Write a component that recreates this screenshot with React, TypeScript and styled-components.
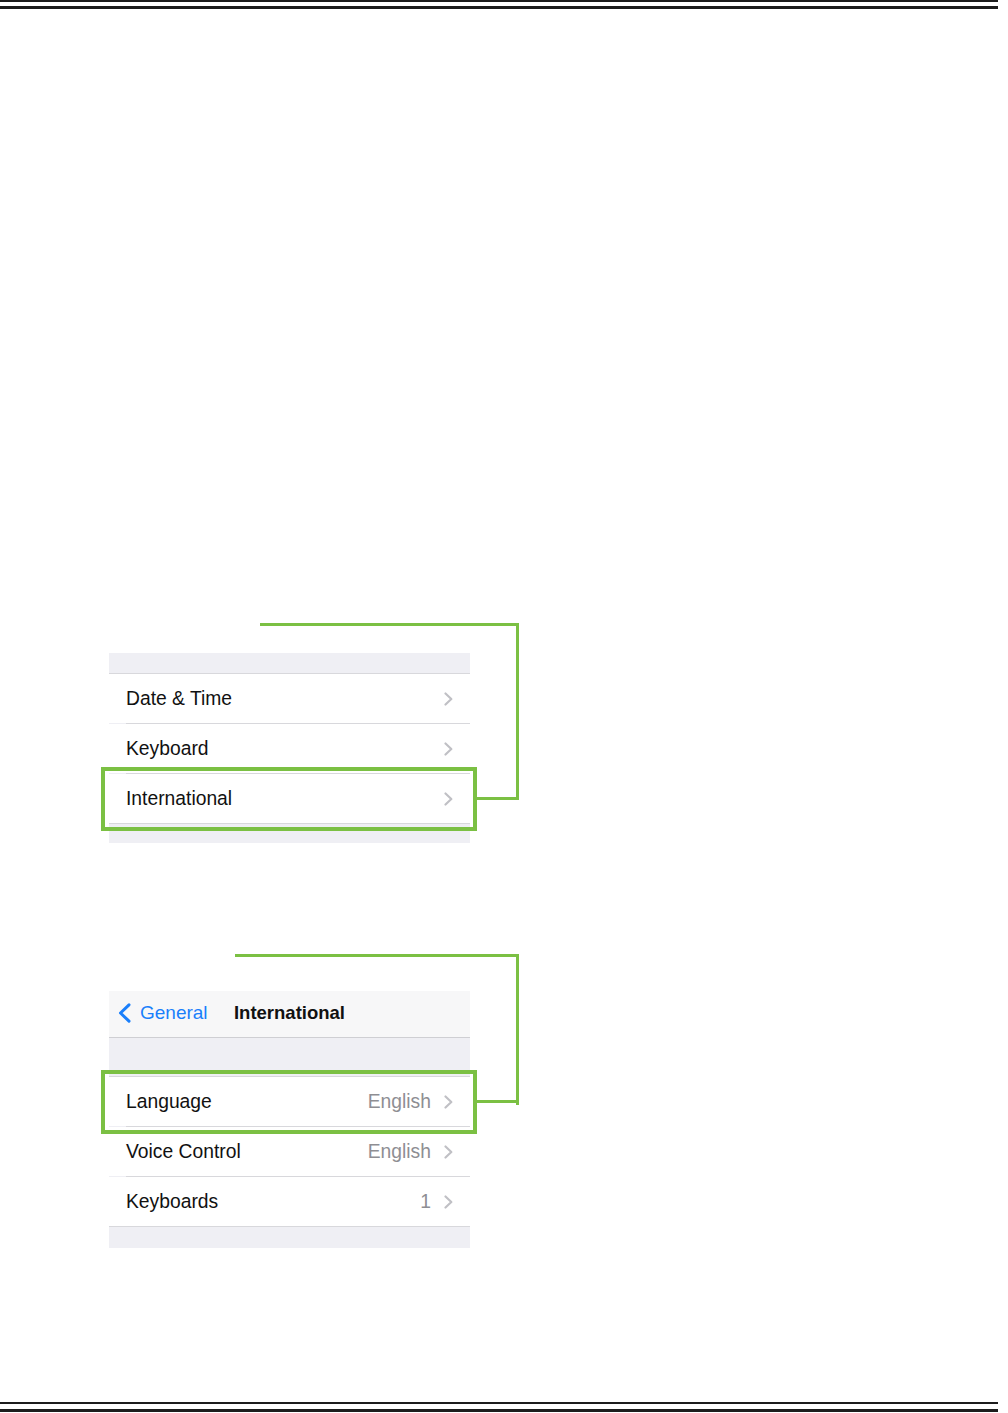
import React from 'react';
import styled, { createGlobalStyle } from 'styled-components';

const GlobalStyle = createGlobalStyle`
	html, body {
		margin: 0;
		padding: 0;
		background: #ffffff;
	}

	body {
		font-family: "Liberation Sans", Arial, sans-serif;
		-webkit-font-smoothing: antialiased;
	}
`;

const green = '#7bc043';
const blue = '#1a7ffb';

const Page = styled.div`
	min-height: 1413px;
	display: flex;
	flex-direction: column;
`;

const Rules = styled.div<{ $flip?: boolean }>`
	width: 998px;
	display: flex;
	flex-direction: ${({ $flip }) => ($flip ? 'column-reverse' : 'column')};
	gap: ${({ $flip }) => ($flip ? '5px' : '4px')};
	margin-top: ${({ $flip }) => ($flip ? 'auto' : '0')};
	margin-bottom: ${({ $flip }) => ($flip ? '1px' : '0')};
`;

const Rule = styled.div<{ $thick?: boolean }>`
	height: ${({ $thick }) => ($thick ? '3px' : '2px')};
	background: #1c1c1c;
`;

const Figure = styled.div<{ $top: number; $lead: number }>`
	position: relative;
	width: 361px;
	margin-left: 109px;
	margin-top: ${({ $top }) => $top}px;
	padding-top: ${({ $lead }) => $lead}px;
`;

const Leader = styled.div<{ $left: number; $height: number }>`
	position: absolute;
	top: 0;
	left: ${({ $left }) => $left}px;
	width: ${({ $left }) => 410 - $left}px;
	height: ${({ $height }) => $height}px;
	border-top: 3px solid ${green};
	border-right: 3px solid ${green};
	box-sizing: border-box;
`;

const Panel = styled.div`
	background: #efeff4;
	display: flex;
	flex-direction: column;
`;

const Band = styled.div<{ $h: number }>`
	height: ${({ $h }) => $h}px;
	background: #efeff4;
	border-bottom: 1px solid #d8d8dc;
`;

const BottomBand = styled.div<{ $h: number }>`
	height: ${({ $h }) => $h}px;
	background: #efeff4;
`;

const NavBar = styled.div`
	height: 46px;
	background: #f7f7f8;
	border-bottom: 1px solid #cfcfd3;
	display: grid;
	grid-template-columns: 1fr auto 1fr;
	align-items: center;
	padding-left: 9px;
`;

const Back = styled.div`
	display: flex;
	align-items: center;
	gap: 9px;
	color: ${blue};
	font-size: 19px;
	margin-top: -3px;
`;

const Title = styled.div`
	font-size: 18.5px;
	font-weight: bold;
	color: #111;
	margin-top: -3px;
	padding-right: 9px;
`;

const Row = styled.div<{ $last?: boolean }>`
	position: relative;
	height: 49px;
	background: #ffffff;
	display: flex;
	align-items: center;
	padding: 0 17px;
	font-size: 19.3px;
	color: #111;

	&::after {
		content: '';
		position: absolute;
		bottom: -1px;
		left: ${({ $last }) => ($last ? '0' : '17px')};
		right: 0;
		height: 1px;
		background: #d8d8dc;
		z-index: 1;
	}

	& + & {
		margin-top: 1px;
	}
`;

const Label = styled.span`
	flex: 1;
`;

const Value = styled.span`
	color: #8e8e93;
	margin-right: 13px;
`;

const Highlight = styled.div`
	position: absolute;
	top: -7px;
	bottom: -8px;
	left: -8px;
	right: -7px;
	border: 4px solid ${green};
	z-index: 2;

	&::after {
		content: '';
		position: absolute;
		left: calc(100% + 4px);
		top: calc(50% - 2px);
		width: 40px;
		height: 3px;
		background: ${green};
	}
`;

const Chevron = () => (
	<svg width="9" height="14" viewBox="0 0 9 14">
		<polyline points="1.5,1.5 7.3,7 1.5,12.5" fill="none" stroke="#c0c0c5" strokeWidth="2.2" strokeLinecap="round" strokeLinejoin="round" />
	</svg>
);

const BackChevron = () => (
	<svg width="13" height="20" viewBox="0 0 13 20">
		<polyline points="11,1.8 2.5,10 11,18.2" fill="none" stroke={blue} strokeWidth="3" strokeLinecap="round" strokeLinejoin="round" />
	</svg>
);

interface IRowProps {
	label: string;
	value?: string;
	last?: boolean;
	marked?: boolean;
}

const SettingRow = ({ label, value, last, marked }: IRowProps) => (
	<Row $last={last}>
		<Label>{label}</Label>
		{value && <Value>{value}</Value>}
		<Chevron />
		{marked && <Highlight />}
	</Row>
);

const App = () => (
	<Page>
		<GlobalStyle />
		<Rules>
			<Rule />
			<Rule $thick />
		</Rules>

		<Figure $top={614} $lead={30}>
			<Leader $left={151} $height={177} />
			<Panel>
				<Band $h={20} />
				<SettingRow label="Date & Time" />
				<SettingRow label="Keyboard" />
				<SettingRow label="International" last marked />
				<BottomBand $h={20} />
			</Panel>
		</Figure>

		<Figure $top={111} $lead={37}>
			<Leader $left={126} $height={151} />
			<Panel>
				<NavBar>
					<Back>
						<BackChevron />
						General
					</Back>
					<Title>International</Title>
					<span />
				</NavBar>
				<Band $h={38} />
				<SettingRow label="Language" value="English" marked />
				<SettingRow label="Voice Control" value="English" />
				<SettingRow label="Keyboards" value="1" last />
				<BottomBand $h={22} />
			</Panel>
		</Figure>

		<Rules $flip>
			<Rule $thick />
			<Rule />
		</Rules>
	</Page>
);

export default App;
